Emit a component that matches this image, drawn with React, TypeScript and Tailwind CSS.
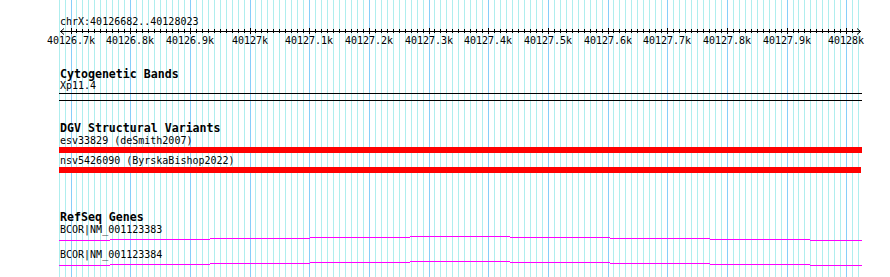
import React from "react";

const ks = Array.from({ length: 135 }, (_, i) => i - 2);
const xAt = (k: number) => Math.floor(12 + 5.967 * k) + 0.5;
const labels = [
  "40126.7k","40126.8k","40126.9k","40127k","40127.1k","40127.2k","40127.3k",
  "40127.4k","40127.5k","40127.6k","40127.7k","40127.8k","40127.9k","40128k",
];

// step line segments: [x1, x2, y] in canvas-local coords
const steps: [number, number, number][] = [
  [0, 51, 4], [51, 151, 3], [151, 251, 2], [251, 351, 1], [351, 451, 0],
  [451, 551, 1], [551, 651, 2], [651, 751, 3], [751, 803, 4],
];

function GridLines() {
  return (
    <svg className="absolute inset-0" width={803} height={277}>
      {ks.map((k) => (
        <line
          key={k}
          x1={xAt(k)}
          x2={xAt(k)}
          y1={0}
          y2={277}
          stroke={k % 10 === 0 ? "#87cefa" : "#afeeee"}
          strokeWidth={1}
        />
      ))}
    </svg>
  );
}

function Ruler() {
  return (
    <svg width={803} height={18} className="block overflow-visible">
      <line x1={1} x2={802} y1={3.5} y2={3.5} stroke="#000" strokeWidth={1} />
      <polyline points="5,0.5 1.5,3.5 5,6.5" fill="none" stroke="#000" strokeWidth={1} />
      <polyline points="798,0.5 801.5,3.5 798,6.5" fill="none" stroke="#000" strokeWidth={1} />
      {ks
        .filter((k) => k >= 0 && k <= 131)
        .map((k) => (
          <line
            key={k}
            x1={xAt(k)}
            x2={xAt(k)}
            y1={k % 10 === 0 ? 0 : 1}
            y2={k % 10 === 0 ? 6 : 5}
            stroke="#000"
            strokeWidth={1}
          />
        ))}
      {labels.map((l, i) => (
        <text
          key={l}
          x={xAt(i * 10) - 0.5}
          y={16}
          textAnchor="middle"
          fontSize={10}
          fontFamily="'DejaVu Sans Mono', monospace"
          fill="#000"
        >
          {l}
        </text>
      ))}
    </svg>
  );
}

function StepLine() {
  return (
    <svg width={803} height={5} className="block">
      {steps.map(([a, b, y], i) => (
        <line key={i} x1={a} x2={b} y1={y + 0.5} y2={y + 0.5} stroke="#ff00ff" strokeWidth={1} />
      ))}
    </svg>
  );
}

const small = "h-[12px] leading-[12px] text-[10px] pl-[1px] whitespace-pre text-black";
const title = "h-[12px] leading-[12px] text-[11.6px] font-bold pl-[1px] whitespace-pre text-black";

export default function App() {
  return (
    <div className="w-[890px] h-[277px] bg-white overflow-hidden font-['DejaVu_Sans_Mono',monospace]">
      <div className="relative ml-[59px] w-[803px] h-[277px]">
        <GridLines />
        <div className="relative pt-[16px] flex flex-col">
          <div className={small}>chrX:40126682..40128023</div>
          <Ruler />

          <div className={`${title} mt-[22px]`}>Cytogenetic Bands</div>
          <div className={small}>Xp11.4</div>
          <div className="mt-[1px] h-[8px] border-y border-black w-[803px]" />

          <div className={`${title} mt-[21px]`}>DGV Structural Variants</div>
          <div className={`${small} mt-[1px]`}>esv33829 (deSmith2007)</div>
          <div className="h-[6px] w-[803px] bg-[#ff0000]" />
          <div className={`${small} mt-[2px]`}>nsv5426090 (ByrskaBishop2022)</div>
          <div className="h-[6px] w-[802px] bg-[#ff0000]" />

          <div className={`${title} mt-[38px]`}>RefSeq Genes</div>
          <div className={`${small} mt-[1px]`}>BCOR|NM_001123383</div>
          <StepLine />
          <div className={`${small} mt-[8px]`}>BCOR|NM_001123384</div>
          <StepLine />
        </div>
      </div>
    </div>
  );
}
